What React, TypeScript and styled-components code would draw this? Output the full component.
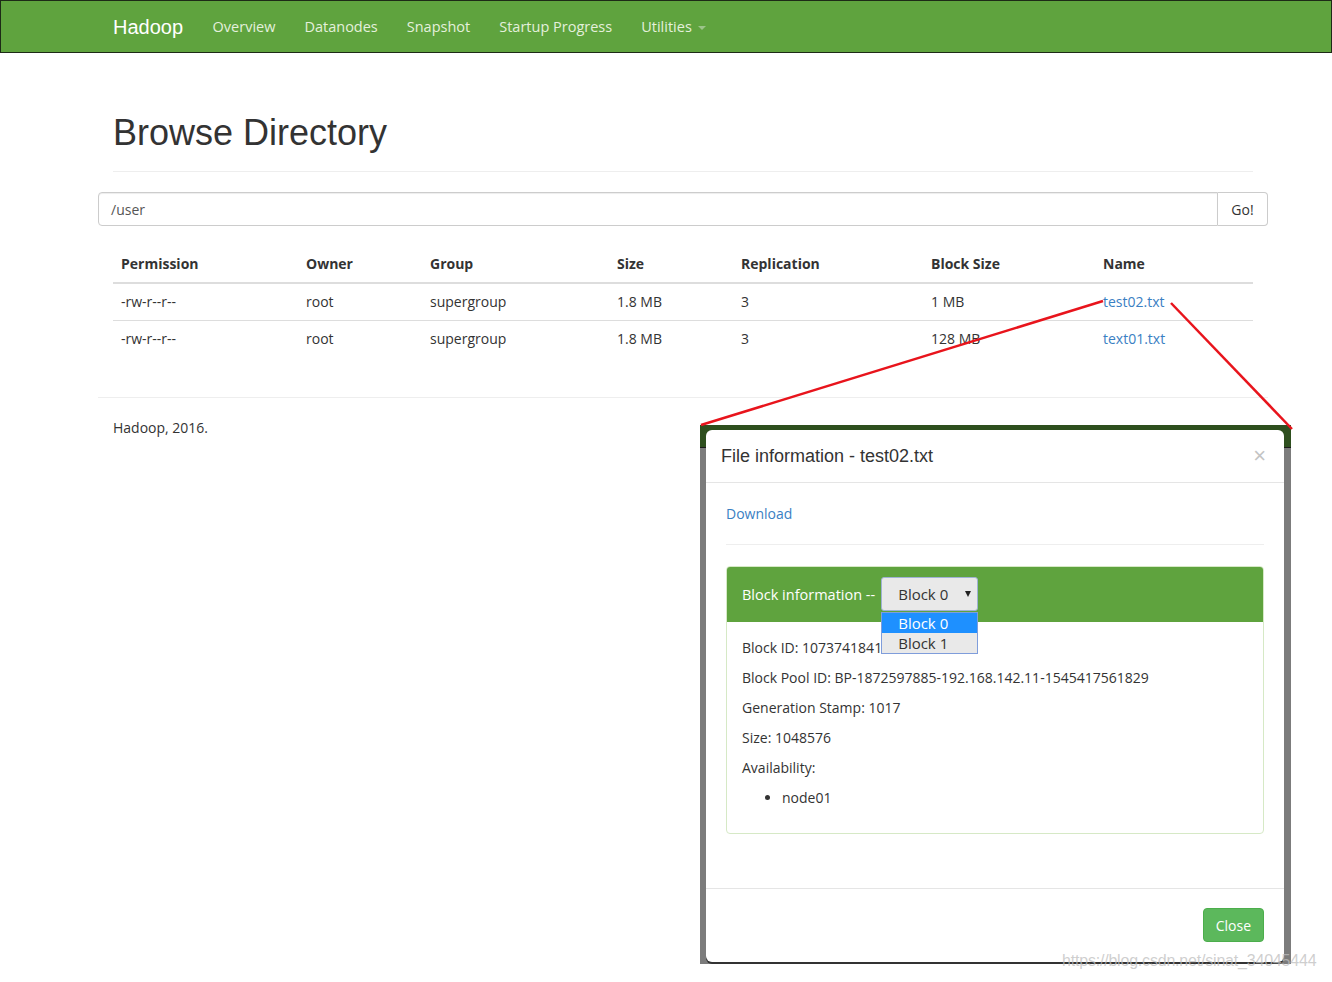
import React from "react";
import styled, { createGlobalStyle } from "styled-components";

const GlobalStyle = createGlobalStyle`
  html, body {
    margin: 0;
    padding: 0;
    background: #fff;
  }
  body {
    font-family: "Open Sans", "Liberation Sans", sans-serif;
    font-size: 14px;
    color: #333;
  }
  * {
    box-sizing: border-box;
  }
`;

const Page = styled.div`
  position: relative;
  width: 1332px;
  min-height: 982px;
  overflow: hidden;
`;

const Navbar = styled.nav`
  height: 53px;
  background: #5fa33e;
  border: 1px solid #1d2a16;
  display: flex;
  align-items: center;
  padding-left: 112px;
`;

const Brand = styled.a`
  font-family: "Liberation Sans", Arial, sans-serif;
  font-size: 20px;
  color: #fff;
  margin-right: 15px;
  line-height: 20px;
`;

const NavLink = styled.a`
  font-size: 14.5px;
  color: #e4f0dc;
  padding: 0 14.5px;
  line-height: 20px;
  display: flex;
  align-items: center;
  gap: 6px;
`;

const Caret = styled.span`
  width: 0;
  height: 0;
  border-left: 4px solid transparent;
  border-right: 4px solid transparent;
  border-top: 4px solid #9cc48a;
  margin-top: 3px;
`;

const Container = styled.div`
  width: 1170px;
  margin-left: 98px;
`;

const PageHeader = styled.div`
  margin: 60px 15px 20px;
  padding-bottom: 18px;
  border-bottom: 1px solid #eee;
`;

const Title = styled.h1`
  margin: 0;
  font-family: "Liberation Sans", Arial, sans-serif;
  font-size: 36px;
  font-weight: 400;
  line-height: 40px;
  color: #333;
`;

const InputGroup = styled.div`
  display: flex;
  height: 34px;
`;

const PathInput = styled.div`
  flex: 1;
  border: 1px solid #ccc;
  border-radius: 4px 0 0 4px;
  padding: 0 12px;
  display: flex;
  align-items: center;
  color: #555;
  box-shadow: inset 0 1px 1px rgba(0, 0, 0, 0.075);
`;

const GoButton = styled.button`
  width: 50px;
  border: 1px solid #ccc;
  border-left: none;
  border-radius: 0 4px 4px 0;
  background: #fff;
  font-family: "Open Sans", "Liberation Sans", sans-serif;
  font-size: 14px;
  color: #333;
  padding: 0;
`;

const Table = styled.table`
  width: 1140px;
  margin: 19px 15px 40px;
  border-collapse: collapse;
`;

const Th = styled.th<{ $w: number }>`
  width: ${(p) => p.$w}px;
  text-align: left;
  font-weight: 700;
  padding: 9px 8px 8px;
  line-height: 20px;
  border-bottom: 2px solid #ddd;
`;

const Td = styled.td`
  padding: 8px;
  line-height: 20px;
  border-top: 1px solid #ddd;
`;

const Link = styled.a`
  color: #3a80c3;
  text-decoration: none;
`;

const Footer = styled.div`
  border-top: 1px solid #eee;
  padding: 20px 15px;
  line-height: 20px;
`;

/* pasted screenshot of the file dialog */
const Shot = styled.div`
  position: absolute;
  left: 700px;
  top: 425px;
  width: 591px;
  height: 539px;
  padding: 5px 7px 0 6px;
  background: linear-gradient(
    to bottom,
    #2e4f1e 0,
    #2e4f1e 22px,
    #1b1b1b 22px,
    #1b1b1b 23px,
    #7c7c7c 23px
  );
`;

const Modal = styled.div`
  background: #fff;
  border-radius: 6px;
  height: 532px;
  display: flex;
  flex-direction: column;
  box-shadow: 0 2px 0 #333;
`;

const ModalHeader = styled.div`
  display: flex;
  align-items: center;
  justify-content: space-between;
  padding: 14px 18px 14px 15px;
  border-bottom: 1px solid #e5e5e5;
`;

const ModalTitle = styled.h4`
  margin: 0;
  font-family: "Liberation Sans", Arial, sans-serif;
  font-size: 18px;
  font-weight: 400;
  line-height: 24px;
  color: #333;
`;

const CloseX = styled.span`
  font-family: "Liberation Sans", Arial, sans-serif;
  font-size: 22px;
  color: #c4c4c4;
  line-height: 20px;
`;

const ModalBody = styled.div`
  position: relative;
  flex: 1;
  padding: 21px 20px 20px;
`;

const Divider = styled.hr`
  border: none;
  border-top: 1px solid #eee;
  margin: 20px 0 21px;
`;

const Panel = styled.div`
  border: 1px solid #d6e9c6;
  border-radius: 4px;
`;

const PanelHeading = styled.div`
  background: #5fa33e;
  color: #fff;
  font-size: 14.5px;
  padding: 10px 15px 11px;
  display: flex;
  align-items: center;
  gap: 6px;
  border-radius: 3px 3px 0 0;
`;

const Select = styled.div`
  position: relative;
  width: 97px;
  height: 34px;
  background: #e9e9e9;
  border: 1px solid #9fb2d4;
  border-radius: 3px;
  color: #333;
  font-size: 15px;
  display: flex;
  align-items: center;
  padding-left: 16px;
`;

const Arrow = styled.span`
  position: absolute;
  right: 6px;
  top: 13px;
  width: 0;
  height: 0;
  border-left: 3px solid transparent;
  border-right: 3px solid transparent;
  border-top: 6px solid #222;
`;

const Options = styled.ul`
  position: absolute;
  left: -1px;
  top: 34px;
  width: 97px;
  margin: 0;
  padding: 0;
  list-style: none;
  border: 1px solid #7f9ddb;
  background: #e9e9e9;
  z-index: 2;
`;

const Option = styled.li<{ $active?: boolean }>`
  height: 20px;
  line-height: 20px;
  padding-left: 16px;
  font-size: 15px;
  background: ${(p) => (p.$active ? "#1e90ff" : "#e9e9e9")};
  color: ${(p) => (p.$active ? "#fff" : "#333")};
`;

const PanelBody = styled.div`
  padding: 16px 15px 15px;
`;

const Line = styled.p`
  margin: 0 0 10px;
  line-height: 20px;
`;

const Nodes = styled.ul`
  margin: 0 0 10px;
  padding-left: 40px;
  line-height: 20px;
`;

const ModalFooter = styled.div`
  display: flex;
  justify-content: flex-end;
  padding: 19px 20px 20px;
  border-top: 1px solid #e5e5e5;
`;

const CloseButton = styled.button`
  background: #5cb85c;
  border: 1px solid #4cae4c;
  border-radius: 4px;
  color: #fff;
  font-family: "Open Sans", "Liberation Sans", sans-serif;
  font-size: 14px;
  height: 34px;
  padding: 0 12px;
`;

const Annotation = styled.svg`
  position: absolute;
  left: 0;
  top: 0;
  pointer-events: none;
`;

const Watermark = styled.div`
  position: absolute;
  left: 1062px;
  top: 952px;
  font-family: "Liberation Sans", Arial, sans-serif;
  font-size: 16px;
  color: rgba(190, 190, 190, 0.75);
  letter-spacing: -0.2px;
`;

const rows = [
  { name: "test02.txt", block: "1 MB" },
  { name: "text01.txt", block: "128 MB" },
];

const cols: [string, number][] = [
  ["Permission", 185],
  ["Owner", 124],
  ["Group", 187],
  ["Size", 124],
  ["Replication", 190],
  ["Block Size", 172],
  ["Name", 158],
];

export default function App() {
  return (
    <Page>
      <GlobalStyle />
      <Navbar>
        <Brand>Hadoop</Brand>
        <NavLink>Overview</NavLink>
        <NavLink>Datanodes</NavLink>
        <NavLink>Snapshot</NavLink>
        <NavLink>Startup Progress</NavLink>
        <NavLink>
          Utilities <Caret />
        </NavLink>
      </Navbar>

      <Container>
        <PageHeader>
          <Title>Browse Directory</Title>
        </PageHeader>
        <InputGroup>
          <PathInput>/user</PathInput>
          <GoButton>Go!</GoButton>
        </InputGroup>
        <Table>
          <thead>
            <tr>
              {cols.map(([label, w]) => (
                <Th key={label} $w={w}>
                  {label}
                </Th>
              ))}
            </tr>
          </thead>
          <tbody>
            {rows.map((r) => (
              <tr key={r.name}>
                <Td>-rw-r--r--</Td>
                <Td>root</Td>
                <Td>supergroup</Td>
                <Td>1.8 MB</Td>
                <Td>3</Td>
                <Td>{r.block}</Td>
                <Td>
                  <Link>{r.name}</Link>
                </Td>
              </tr>
            ))}
          </tbody>
        </Table>
        <Footer>Hadoop, 2016.</Footer>
      </Container>

      <Shot>
        <Modal>
          <ModalHeader>
            <ModalTitle>File information - test02.txt</ModalTitle>
            <CloseX>×</CloseX>
          </ModalHeader>
          <ModalBody>
            <Line>
              <Link>Download</Link>
            </Line>
            <Divider />
            <Panel>
              <PanelHeading>
                Block information --
                <Select>
                  Block 0
                  <Arrow />
                  <Options>
                    <Option $active>Block 0</Option>
                    <Option>Block 1</Option>
                  </Options>
                </Select>
              </PanelHeading>
              <PanelBody>
                <Line>Block ID: 1073741841</Line>
                <Line>Block Pool ID: BP-1872597885-192.168.142.11-1545417561829</Line>
                <Line>Generation Stamp: 1017</Line>
                <Line>Size: 1048576</Line>
                <Line>Availability:</Line>
                <Nodes>
                  <li>node01</li>
                </Nodes>
              </PanelBody>
            </Panel>
          </ModalBody>
          <ModalFooter>
            <CloseButton>Close</CloseButton>
          </ModalFooter>
        </Modal>
      </Shot>

      <Annotation width="1332" height="982">
        <line x1="701" y1="425" x2="1103" y2="301" stroke="#e8141c" strokeWidth="2.5" />
        <line x1="1171" y1="303" x2="1292" y2="429" stroke="#e8141c" strokeWidth="2.5" />
      </Annotation>
      <Watermark>https://blog.csdn.net/sinat_34045444</Watermark>
    </Page>
  );
}
